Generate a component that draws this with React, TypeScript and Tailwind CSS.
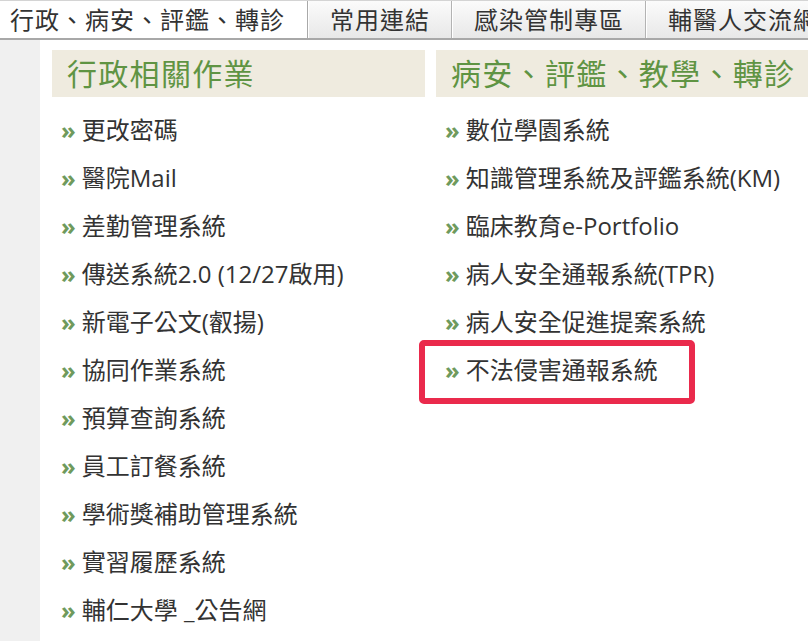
const tabs = [
  { label: "行政、病安、評鑑、轉診", active: true },
  { label: "常用連結", active: false },
  { label: "感染管制專區", active: false },
  { label: "輔醫人交流網", active: false },
];

const adminLinks = [
  "更改密碼",
  "醫院Mail",
  "差勤管理系統",
  "傳送系統2.0 (12/27啟用)",
  "新電子公文(叡揚)",
  "協同作業系統",
  "預算查詢系統",
  "員工訂餐系統",
  "學術獎補助管理系統",
  "實習履歷系統",
  "輔仁大學 _公告網",
];

const safetyLinks = [
  "數位學園系統",
  "知識管理系統及評鑑系統(KM)",
  "臨床教育e-Portfolio",
  "病人安全通報系統(TPR)",
  "病人安全促進提案系統",
  "不法侵害通報系統",
];

const font = { fontFamily: '"Open Sans", "Noto Sans CJK TC", sans-serif' };

const LinkList = ({ items }: { items: string[] }) => (
  <ul className="mt-[9px]">
    {items.map((item) => (
      <li key={item} className="flex h-[48px] items-center pl-[9px] text-[24px] text-[#333] whitespace-nowrap">
        <span className="mr-[6px] text-[24px] font-bold text-[#6f9a5c]">»</span>
        <span>{item}</span>
      </li>
    ))}
  </ul>
);

const SectionTitle = ({ children }: { children: string }) => (
  <div className="flex h-[47px] items-center bg-[#efebdf] pl-[15px] text-[30px] tracking-[1.3px] text-[#5f9443] whitespace-nowrap">
    {children}
  </div>
);

export default function App() {
  return (
    <div className="relative h-[641px] w-[808px] overflow-hidden bg-white" style={font}>
      {/* Tab strip */}
      <div className="flex h-[40px] border-t border-b-2 border-t-[#d4d4d4] border-b-[#a8a8a8]">
        {tabs.map((tab) => (
          <div
            key={tab.label}
            className={
              tab.active
                ? "flex shrink-0 items-center border-r border-[#a9a9a9] bg-white pl-[10px] pr-[22px] text-[24px] tracking-[1px] text-[#333]"
                : "flex shrink-0 items-center border-r border-l border-r-[#b3b3b3] border-l-white bg-gradient-to-b from-[#fbfbfb] to-[#e8e8e8] px-[21px] text-[24px] tracking-[1px] text-[#333]"
            }
          >
            {tab.label}
          </div>
        ))}
      </div>

      <div className="flex h-[601px]">
        <div className="w-[40px] shrink-0 bg-[#f0f0f0]" />
        <div className="grid flex-1 grid-cols-[373px_1fr] gap-x-[11px] pl-[12px] pt-[10px]">
          <div>
            <SectionTitle>行政相關作業</SectionTitle>
            <LinkList items={adminLinks} />
          </div>
          <div>
            <SectionTitle>病安、評鑑、教學、轉診</SectionTitle>
            <LinkList items={safetyLinks} />
          </div>
        </div>
      </div>

      {/* Highlight annotation */}
      <div className="pointer-events-none absolute left-[419px] top-[340px] h-[64px] w-[276px] rounded-[5px] border-[6px] border-[#ea2a4c]" />
    </div>
  );
}
